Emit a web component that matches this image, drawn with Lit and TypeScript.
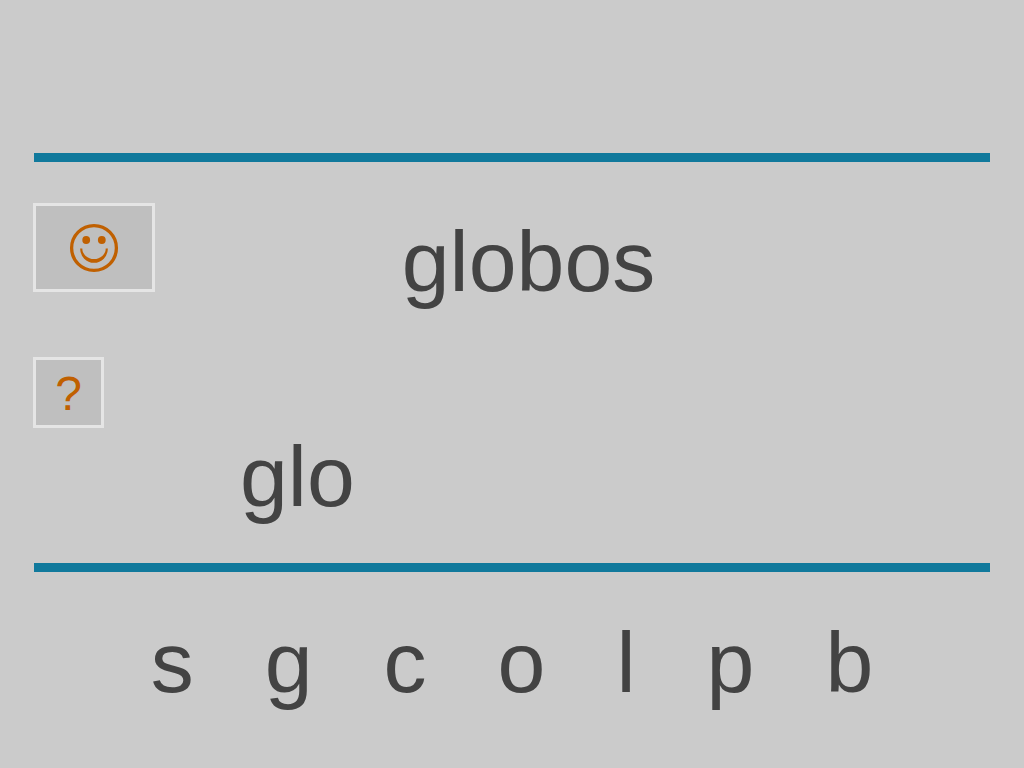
import { LitElement, html, css } from "lit";
import { customElement, state } from "lit/decorators.js";

@customElement("app-root")
export class AppRoot extends LitElement {
  static styles = css`
    :host {
      display: block;
      min-height: 100vh;
      background: #cbcbcb;
      color: #434343;
      font-family: "Liberation Sans", Arial, Helvetica, sans-serif;
      font-size: 86px;
      line-height: 96px;
    }
    .header {
      height: 153px;
    }
    .rule {
      height: 9px;
      margin: 0 34px;
      border: 0;
      background: #10799c;
    }
    .stage {
      display: grid;
      grid-template-columns: 207px 1fr 174px;
      row-gap: 48px;
      align-items: start;
      padding: 41px 33px 39px;
    }
    button {
      margin: 0;
      padding: 0;
      color: inherit;
      font: inherit;
      background: none;
      border: 0;
      cursor: pointer;
    }
    .tile {
      box-sizing: border-box;
      display: flex;
      align-items: center;
      justify-content: center;
      grid-column: 1;
      border: 3px solid #e5e5e5;
      background: #bfbfbf;
      color: #c06000;
    }
    .cheer {
      width: 122px;
      height: 89px;
    }
    .hint {
      width: 71px;
      height: 71px;
      padding-top: 2px;
      font-size: 48px;
      line-height: 54px;
    }
    .smiley {
      display: block;
      width: 50px;
      height: 50px;
    }
    .word {
      grid-column: 2;
      margin: 0;
      padding-top: 10px;
      font-weight: 400;
      font-size: inherit;
      text-align: center;
    }
    .answer {
      grid-column: 2;
      padding-top: 71px;
    }
    .letters {
      display: flex;
      justify-content: center;
      gap: 71px;
      padding: 42px 34px;
    }
  `;

  @state() private word = "globos";
  @state() private answer = "glo";
  private letters = ["s", "g", "c", "o", "l", "p", "b"];

  private add(letter: string) {
    if (this.word.startsWith(this.answer + letter)) this.answer += letter;
  }

  private hint() {
    this.answer = this.word.slice(0, this.answer.length + 1);
  }

  private restart() {
    this.answer = "";
  }

  render() {
    return html`
      <div class="header"></div>
      <hr class="rule" />
      <main class="stage">
        <button class="tile cheer" aria-label="☺" @click=${this.restart}>
          <svg class="smiley" viewBox="0 0 50 50" aria-hidden="true">
            <circle cx="25" cy="25" r="22.4" fill="none" stroke="currentColor" stroke-width="3.3" />
            <circle cx="17.2" cy="17" r="3.9" fill="currentColor" />
            <circle cx="32.8" cy="17" r="3.9" fill="currentColor" />
            <path
              d="M11.1 25.6 A13.9 14.2 0 0 0 38.9 25.6 L36.7 25.6 A11.7 10.5 0 0 1 13.3 25.6 Z"
              fill="currentColor"
            />
          </svg>
        </button>
        <h1 class="word">${this.word}</h1>
        <button class="tile hint" @click=${this.hint}>?</button>
        <output class="answer">${this.answer}</output>
      </main>
      <hr class="rule" />
      <div class="letters">
        ${this.letters.map(
          (letter) => html`<button @click=${() => this.add(letter)}>${letter}</button>`
        )}
      </div>
    `;
  }
}
